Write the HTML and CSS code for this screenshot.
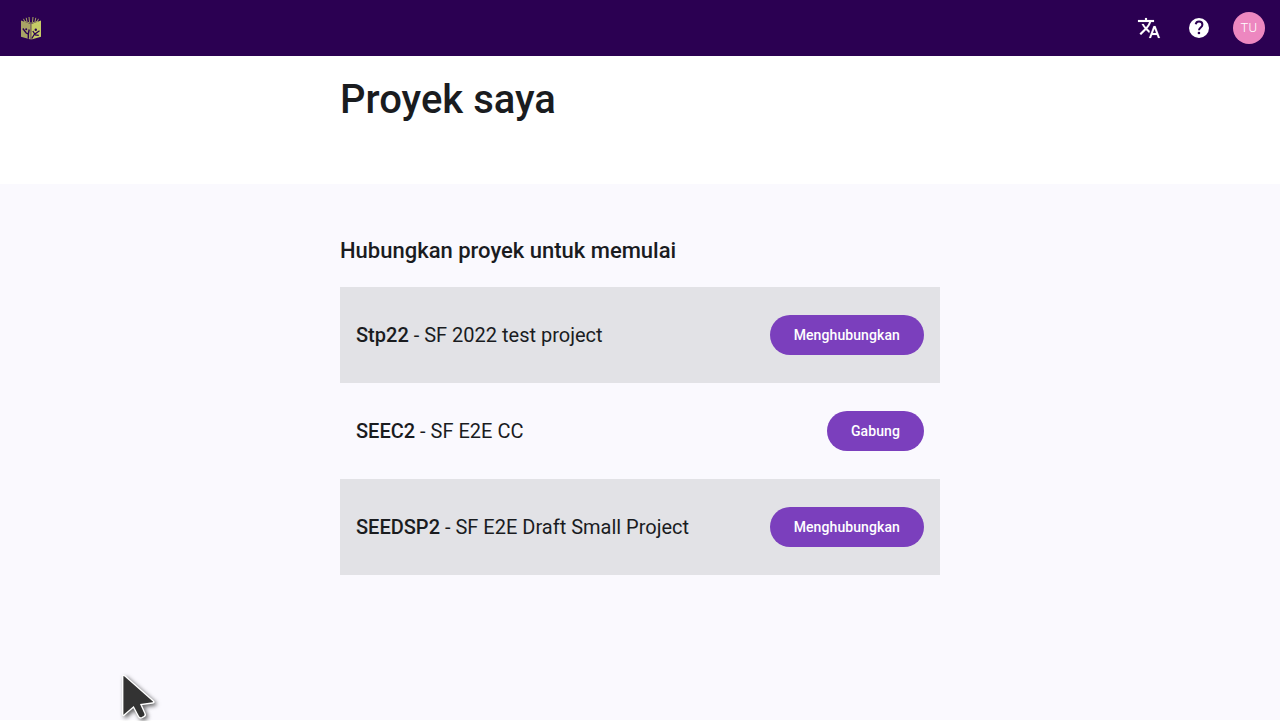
FILE: index.html
```html
<!DOCTYPE html>
<html lang="id">
<head>
<meta charset="utf-8">
<title>Proyek saya</title>
<link rel="stylesheet" href="styles.css">
</head>
<body>
<div class="app">
  <header class="toolbar">
    <svg class="logo" viewBox="0 0 22 24" width="22" height="24" aria-label="Logo">
      <path d="M1 4.500 10.700 8v15.500L1 20.800z" fill="#a9a465"/>
      <path d="M11.300 8 21 4.500v16.300l-9.700 2.700z" fill="#c6cb66"/>
      <path d="M4 5.200 11 7.200l7-2M4.500 5 3.500 2.800M7 5.500 6.200 1.800M9.500 6 9 1M12.500 6l.5-5M15 5.500l.8-3.700M17.500 5l1-2.200" fill="none" stroke="#c6cb66" stroke-width=".8"/>
      <path d="M2.800 12.500 6.200 17 8.500 18.200M9.200 13.500 8.300 18v4.700" fill="none" stroke="#2b0052" stroke-width="1.400"/>
      <path d="M12.800 15l2 3 4.700-3.200M14.800 17.500l-3 5M14.800 18.800l4 .5" fill="none" stroke="#2b0052" stroke-width="1.300"/>
      <circle cx="6.200" cy="13.300" r="1" fill="#2b0052"/>
      <circle cx="15.800" cy="13.800" r="1.200" fill="#2b0052"/>
    </svg>
    <nav class="actions">
      <svg class="icon translate" viewBox="0 0 24 24"><path d="M12.870 15.070l-2.540-2.510.03-.03c1.740-1.940 2.980-4.170 3.710-6.530H17V4h-7V2H8v2H1v1.990h11.170C11.500 7.920 10.440 9.750 9 11.350 8.070 10.320 7.300 9.190 6.690 8h-2c.73 1.630 1.730 3.170 2.980 4.560l-5.090 5.020L4 19l5-5 3.110 3.110.76-2.040zM18.500 10h-2L12 22h2l1.120-3h4.750L21 22h2l-4.500-12zm-2.620 7l1.620-4.330L19.120 17h-3.240z"/></svg>
      <svg class="icon" viewBox="0 0 24 24"><circle cx="12" cy="12" r="10"/><path class="mark" d="M8.700 8.300C9.100 6.500 10.300 5.600 12 5.600c2 0 3.400 1.200 3.400 3.100 0 2.600-3.400 2.800-3.400 5.500"/><circle class="dot" cx="11.950" cy="17" r="1.300"/></svg>
      <div class="avatar">TU</div>
    </nav>
  </header>
  <section class="banner">
    <h1 class="title">Proyek saya</h1>
  </section>
  <main class="content">
    <h2 class="subtitle">Hubungkan proyek untuk memulai</h2>
    <div class="project shaded">
      <span><b>Stp22</b> - SF 2022 test project</span>
      <button class="join">Menghubungkan</button>
    </div>
    <div class="project">
      <span><b>SEEC2</b> - SF E2E CC</span>
      <button class="join">Gabung</button>
    </div>
    <div class="project shaded">
      <span><b>SEEDSP2</b> - SF E2E Draft Small Project</span>
      <button class="join">Menghubungkan</button>
    </div>
  </main>
</div>
<svg class="cursor" viewBox="0 0 50 56" width="50" height="56"><path d="M15 11Q12.700 9.300 12.700 12V49q0 2.500 1.800.8L23.500 42l5 9.500q1.200 2.200 3.500 1.200l2-1q2-1 1-3.200L31 39.500l11.500-1.500q2.500-.3.800-2z" fill="#333" stroke="#fff" stroke-width="1.400"/></svg>
</body>
</html>
```
FILE: styles.css
```css
body {
  margin: 0;
  background: #fff;
  color: #1a1c1f;
  font-family: Roboto, sans-serif;
  overflow: hidden;
}
.app {
  height: 720px;
  background: #faf9fe;
}
.toolbar {
  height: 56px;
  box-sizing: border-box;
  padding: 0 15px 0 20px;
  display: flex;
  align-items: center;
  justify-content: space-between;
  background: #2b0052;
}
.logo { display: block; }
.actions {
  display: flex;
  align-items: center;
}
.icon {
  width: 24px;
  height: 24px;
  fill: #fff;
  margin-right: 26px;
}
.icon + .avatar { margin-left: -4px; }
.translate {
  stroke: #fff;
  stroke-width: .15;
}
.mark {
  fill: none;
  stroke: #2b0052;
  stroke-width: 2;
}
.dot { fill: #2b0052; }
.avatar {
  width: 32px;
  height: 32px;
  border-radius: 50%;
  background: #ed87c0;
  color: #fff;
  font: 300 13px/32px Roboto, sans-serif;
  letter-spacing: .4px;
  text-align: center;
}
.banner {
  height: 128px;
  background: #fff;
}
.title {
  width: 600px;
  margin: 0 auto;
  padding-top: 20px;
  font-size: 40px;
  line-height: 48px;
  font-weight: 500;
}
.banner { display: flow-root; }
.content {
  width: 600px;
  margin: 0 auto;
  padding-top: 52px;
}
.subtitle {
  margin: 0 0 21px;
  font-size: 22px;
  line-height: 30px;
  font-weight: 500;
}
.project {
  height: 96px;
  box-sizing: border-box;
  padding: 0 16px;
  display: flex;
  align-items: center;
  justify-content: space-between;
  font-size: 20px;
}
.project b { font-weight: 500; }
.shaded { background: #e2e2e6; }
.join {
  height: 40px;
  padding: 0 24px;
  border: 0;
  border-radius: 20px;
  background: #7b3fbd;
  color: #fff;
  font: 500 14px/20px Roboto, sans-serif;
  letter-spacing: .1px;
}
.cursor {
  position: absolute;
  left: 110px;
  top: 665px;
  filter: drop-shadow(2px 2px 2px rgba(0, 0, 0, .6));
}
```
